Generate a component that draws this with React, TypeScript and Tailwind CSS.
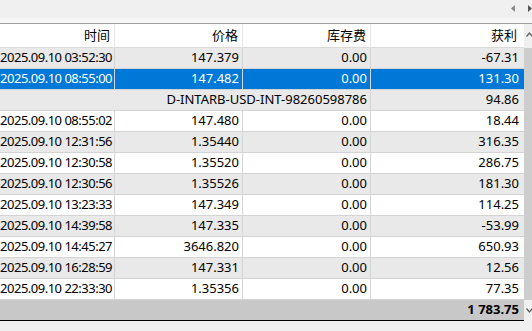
import React from "react";

type Row = { cells: string[]; merged?: boolean; selected?: boolean };

const rows: Row[] = [
  { cells: ["2025.09.10 03:52:30", "147.379", "0.00", "-67.31"] },
  { cells: ["2025.09.10 08:55:00", "147.482", "0.00", "131.30"], selected: true },
  { cells: ["D-INTARB-USD-INT-98260598786", "94.86"], merged: true },
  { cells: ["2025.09.10 08:55:02", "147.480", "0.00", "18.44"] },
  { cells: ["2025.09.10 12:31:56", "1.35440", "0.00", "316.35"] },
  { cells: ["2025.09.10 12:30:58", "1.35520", "0.00", "286.75"] },
  { cells: ["2025.09.10 12:30:56", "1.35526", "0.00", "181.30"] },
  { cells: ["2025.09.10 13:23:33", "147.349", "0.00", "114.25"] },
  { cells: ["2025.09.10 14:39:58", "147.335", "0.00", "-53.99"] },
  { cells: ["2025.09.10 14:45:27", "3646.820", "0.00", "650.93"] },
  { cells: ["2025.09.10 16:28:59", "147.331", "0.00", "12.56"] },
  { cells: ["2025.09.10 22:33:30", "1.35356", "0.00", "77.35"] },
];

const font = {
  fontFamily: '"Noto Sans", "Noto Sans CJK SC", sans-serif',
};

export default function App() {
  return (
    <div
      className="w-[532px] h-[331px] bg-[#f0f0f0] overflow-hidden flex flex-col text-[13px] text-black"
      style={font}
    >
      {/* top strip */}
      <div className="h-[18px] relative">
        <svg className="absolute left-[511px] top-[5px]" width="5" height="7" viewBox="0 0 5 7">
          <path d="M4 0 L0 3.5 L4 7 Z" fill="#888" />
        </svg>
        <svg className="absolute left-[528px] top-[5px]" width="5" height="7" viewBox="0 0 5 7">
          <path d="M0 0 L4 3.5 L0 7 Z" fill="#555" />
        </svg>
      </div>
      <div className="h-[5px] bg-[#f7f7f7]" />
      <div className="h-px bg-[#a0a0a0]" />

      <div className="flex">
        <div className="w-[524px] flex flex-col">
          {/* header */}
          <div className="h-[24px] grid grid-cols-[115px_128px_128px_153px] bg-white border-b border-[#dadada]">
            {["时间", "价格", "库存费", "获利"].map((h, i) => (
              <div
                key={h}
                className={`flex items-center justify-end ${
                  i < 3 ? "border-r border-[#e5e5e5] pr-[4px]" : "pr-[7px]"
                }`}
              >
                {h}
              </div>
            ))}
          </div>

          {rows.map((r, idx) => {
            const bg = r.selected
              ? "bg-[#0078d7] text-white"
              : idx % 2 === 0
              ? "bg-[#e9e9e9]"
              : "bg-white";
            if (r.merged) {
              return (
                <div
                  key={idx}
                  className={`h-[21px] grid grid-cols-[371px_153px] border-b border-[#d4d4d4] ${bg}`}
                >
                  <div className="flex items-center justify-end pr-[3px] border-r border-[#d4d4d4] whitespace-nowrap overflow-hidden">
                    {r.cells[0]}
                  </div>
                  <div className="flex items-center justify-end pr-[5px]">{r.cells[1]}</div>
                </div>
              );
            }
            return (
              <div
                key={idx}
                className={`h-[21px] grid grid-cols-[115px_128px_128px_153px] border-b border-[#d4d4d4] ${bg}`}
              >
                {r.cells.map((c, i) => (
                  <div
                    key={i}
                    className={`flex items-center justify-end whitespace-nowrap overflow-hidden ${
                      i === 0
                        ? "border-r border-[#d4d4d4] pr-[2px] tracking-[-0.5px]"
                        : i < 3
                        ? "border-r border-[#d4d4d4] pr-[3px]"
                        : "pr-[5px]"
                    }`}
                  >
                    {c}
                  </div>
                ))}
              </div>
            );
          })}

          {/* total */}
          <div className="h-[20px] bg-[#c8c8c8] flex items-center justify-end pr-[5px] font-bold">
            1 783.75
          </div>
          <div className="h-px bg-black" />
        </div>

        {/* scrollbar */}
        <div className="w-[8px] flex flex-col">
          <div className="h-[24px] relative">
            <svg className="absolute left-[2px] top-[8px]" width="7" height="5" viewBox="0 0 7 5">
              <path d="M0.5 4.5 L3.5 1 L6.5 4.5" stroke="#606060" strokeWidth="1.3" fill="none" />
            </svg>
          </div>
          <div className="h-[252px] bg-[#cdcdcd]" />
          <div className="h-[20px] relative">
            <svg className="absolute left-[2px] top-[8px]" width="7" height="5" viewBox="0 0 7 5">
              <path d="M0.5 0.5 L3.5 4 L6.5 0.5" stroke="#606060" strokeWidth="1.3" fill="none" />
            </svg>
          </div>
        </div>
      </div>
    </div>
  );
}
